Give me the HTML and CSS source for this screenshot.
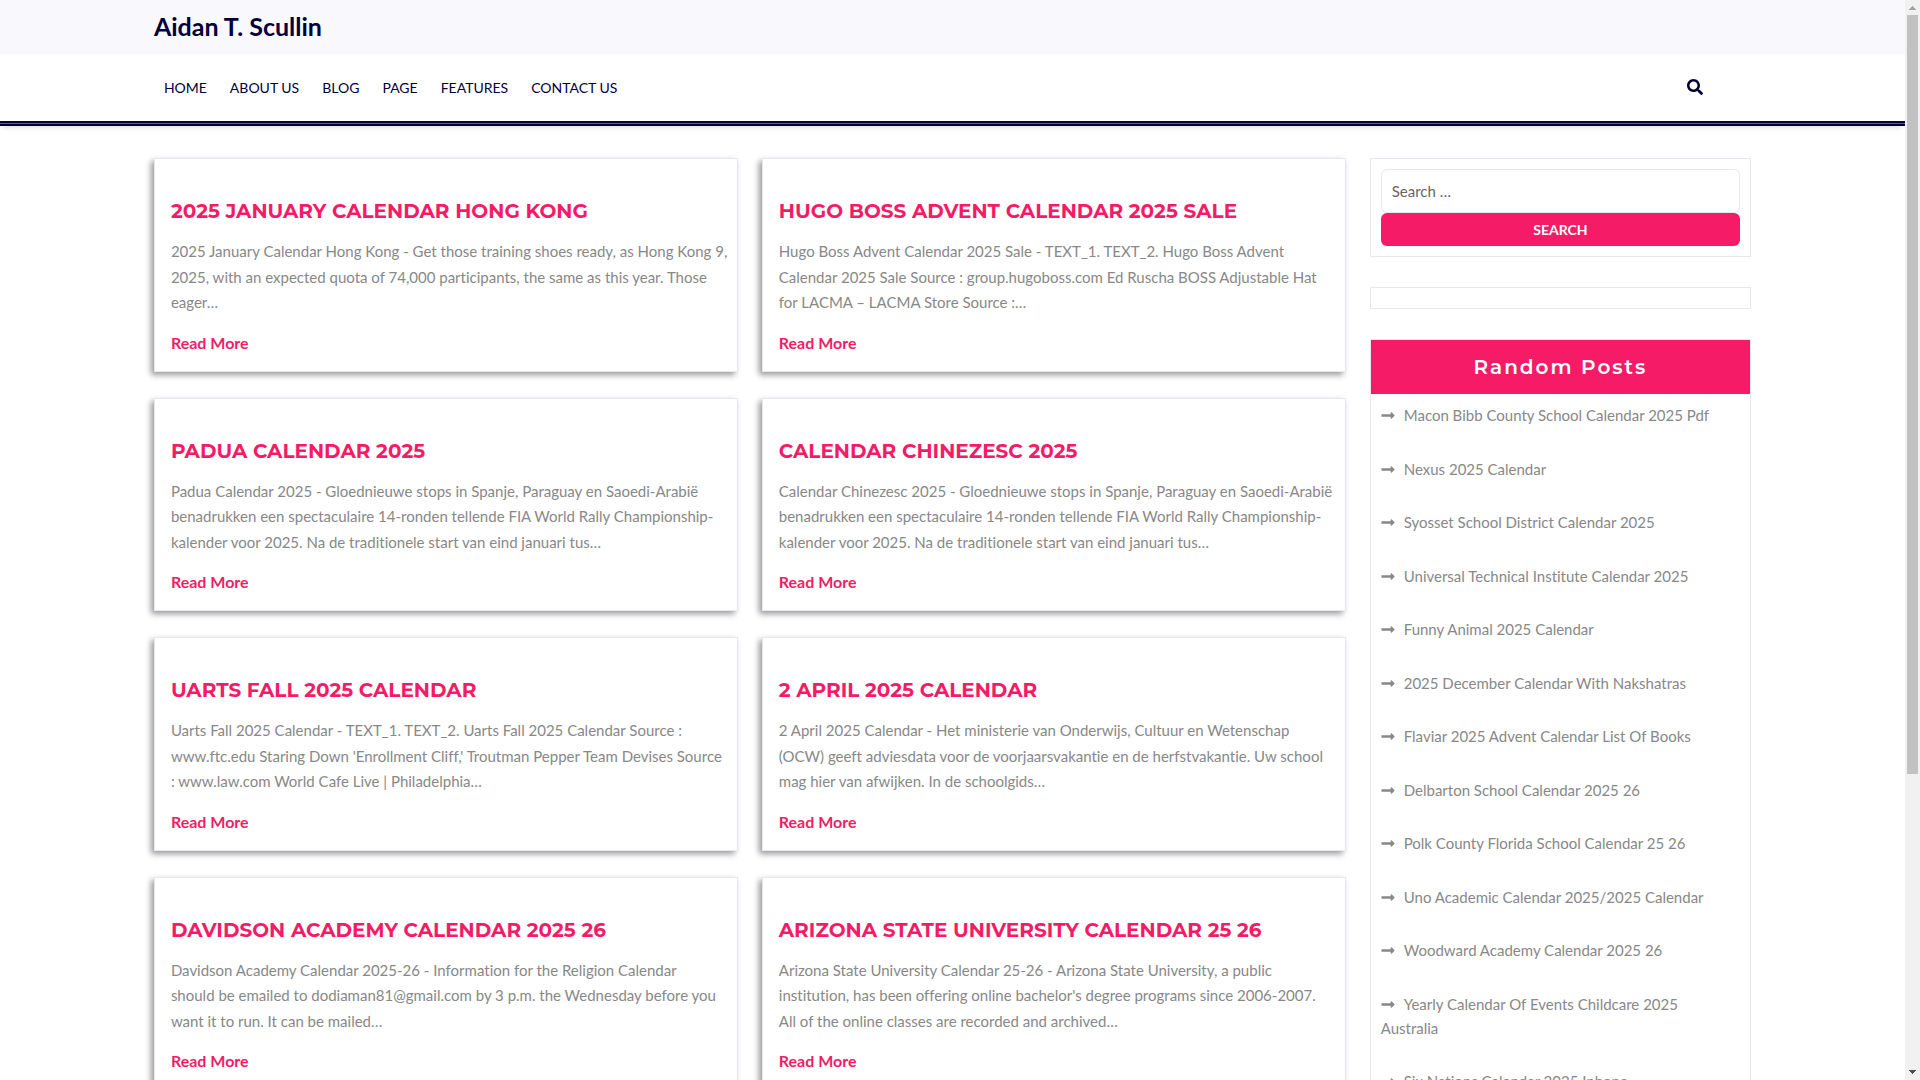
FILE: index.html
```html
<!DOCTYPE html>
<html lang="en">
<head>
    <meta charset="UTF-8">
    <meta name="viewport" content="width=device-width, initial-scale=1">
    <title>Aidan T. Scullin</title>
    <link rel="stylesheet" href="styles.css">
</head>
<body>
    <svg class="sprite" aria-hidden="true">
        <symbol id="arrow" viewBox="0 0 448 512">
            <path d="M313.941 216H12c-6.627 0-12 5.373-12 12v56c0 6.627 5.373 12 12 12h301.941v46.059c0 21.382 25.851 32.09 40.971 16.971l86.059-86.059c9.373-9.373 9.373-24.569 0-33.941l-86.059-86.059c-15.119-15.119-40.971-4.411-40.971 16.971V216z"/>
        </symbol>
    </svg>
    <div class="page">
        <header>
            <div class="topbar">
                <div class="container">
                    <p class="site-title"><a href="#">Aidan T. Scullin</a></p>
                </div>
            </div>
            <div class="menubar">
                <div class="menubar-inner">
                    <div class="container menu-row">
                        <nav class="menu">
                            <a href="#">Home</a>
                            <a href="#">About Us</a>
                            <a href="#">Blog</a>
                            <a href="#">Page</a>
                            <a href="#">Features</a>
                            <a href="#">Contact Us</a>
                        </nav>
                        <button class="search-toggle" type="button" aria-label="Open search">
                            <svg viewBox="0 0 512 512"><path d="M505 442.7L405.3 343c-4.5-4.500-10.600-7-17-7H372c27.600-35.300 44-79.700 44-128C416 93.100 322.900 0 208 0S0 93.100 0 208s93.100 208 208 208c48.300 0 92.700-16.400 128-44v16.300c0 6.400 2.500 12.500 7 17l99.700 99.700c9.400 9.400 24.600 9.400 33.900 0l28.300-28.300c9.400-9.400 9.400-24.600.1-34zM208 336c-70.700 0-128-57.200-128-128 0-70.700 57.200-128 128-128 70.700 0 128 57.200 128 128 0 70.700-57.200 128-128 128z"/></svg>
                        </button>
                    </div>
                </div>
            </div>
        </header>

        <div class="container content">
            <main class="posts">
                <article class="post">
                    <h2><a href="#">2025 January Calendar Hong Kong</a></h2>
                    <p>2025 January Calendar Hong Kong - Get those training shoes ready, as Hong Kong 9, 2025, with an expected quota of 74,000 participants, the same as this year. Those eager…</p>
                    <a class="read-more" href="#">Read More</a>
                </article>
                <article class="post">
                    <h2><a href="#">Hugo Boss Advent Calendar 2025 Sale</a></h2>
                    <p>Hugo Boss Advent Calendar 2025 Sale - TEXT_1. TEXT_2. Hugo Boss Advent Calendar 2025 Sale Source : group.hugoboss.com Ed Ruscha BOSS Adjustable Hat for LACMA – LACMA Store Source :…</p>
                    <a class="read-more" href="#">Read More</a>
                </article>
                <article class="post">
                    <h2><a href="#">Padua Calendar 2025</a></h2>
                    <p>Padua Calendar 2025 - Gloednieuwe stops in Spanje, Paraguay en Saoedi-Arabië benadrukken een spectaculaire 14-ronden tellende FIA World Rally Championship-kalender voor 2025. Na de traditionele start van eind januari tus…</p>
                    <a class="read-more" href="#">Read More</a>
                </article>
                <article class="post">
                    <h2><a href="#">Calendar Chinezesc 2025</a></h2>
                    <p>Calendar Chinezesc 2025 - Gloednieuwe stops in Spanje, Paraguay en Saoedi-Arabië benadrukken een spectaculaire 14-ronden tellende FIA World Rally Championship-kalender voor 2025. Na de traditionele start van eind januari tus…</p>
                    <a class="read-more" href="#">Read More</a>
                </article>
                <article class="post">
                    <h2><a href="#">Uarts Fall 2025 Calendar</a></h2>
                    <p>Uarts Fall 2025 Calendar - TEXT_1. TEXT_2. Uarts Fall 2025 Calendar Source : www.ftc.edu Staring Down 'Enrollment Cliff,' Troutman Pepper Team Devises Source : www.law.com World Cafe Live | Philadelphia…</p>
                    <a class="read-more" href="#">Read More</a>
                </article>
                <article class="post">
                    <h2><a href="#">2 April 2025 Calendar</a></h2>
                    <p>2 April 2025 Calendar - Het ministerie van Onderwijs, Cultuur en Wetenschap (OCW) geeft adviesdata voor de voorjaarsvakantie en de herfstvakantie. Uw school mag hier van afwijken. In de schoolgids…</p>
                    <a class="read-more" href="#">Read More</a>
                </article>
                <article class="post">
                    <h2><a href="#">Davidson Academy Calendar 2025 26</a></h2>
                    <p>Davidson Academy Calendar 2025-26 - Information for the Religion Calendar<br>should be emailed to dodiaman81@gmail.com by 3 p.m. the Wednesday before you want it to run. It can be mailed…</p>
                    <a class="read-more" href="#">Read More</a>
                </article>
                <article class="post">
                    <h2><a href="#">Arizona State University Calendar 25 26</a></h2>
                    <p>Arizona State University Calendar 25-26 - Arizona State University, a public institution, has been offering online bachelor's degree programs since 2006-2007.<br>All of the online classes are recorded and archived…</p>
                    <a class="read-more" href="#">Read More</a>
                </article>
            </main>

            <aside class="sidebar">
                <section class="widget">
                    <form class="search-form">
                        <input type="search" aria-label="Search for" placeholder="Search …">
                        <button type="submit">Search</button>
                    </form>
                </section>
                <section class="widget"></section>
                <section class="widget">
                    <h3>Random Posts</h3>
                    <ul>
                        <li><a href="#"><svg class="arrow"><use href="#arrow"/></svg>Macon Bibb County School Calendar 2025 Pdf</a></li>
                        <li><a href="#"><svg class="arrow"><use href="#arrow"/></svg>Nexus 2025 Calendar</a></li>
                        <li><a href="#"><svg class="arrow"><use href="#arrow"/></svg>Syosset School District Calendar 2025</a></li>
                        <li><a href="#"><svg class="arrow"><use href="#arrow"/></svg>Universal Technical Institute Calendar 2025</a></li>
                        <li><a href="#"><svg class="arrow"><use href="#arrow"/></svg>Funny Animal 2025 Calendar</a></li>
                        <li><a href="#"><svg class="arrow"><use href="#arrow"/></svg>2025 December Calendar With Nakshatras</a></li>
                        <li><a href="#"><svg class="arrow"><use href="#arrow"/></svg>Flaviar 2025 Advent Calendar List Of Books</a></li>
                        <li><a href="#"><svg class="arrow"><use href="#arrow"/></svg>Delbarton School Calendar 2025 26</a></li>
                        <li><a href="#"><svg class="arrow"><use href="#arrow"/></svg>Polk County Florida School Calendar 25 26</a></li>
                        <li><a href="#"><svg class="arrow"><use href="#arrow"/></svg>Uno Academic Calendar 2025/2025 Calendar</a></li>
                        <li><a href="#"><svg class="arrow"><use href="#arrow"/></svg>Woodward Academy Calendar 2025 26</a></li>
                        <li><a href="#"><svg class="arrow"><use href="#arrow"/></svg>Yearly Calendar Of Events Childcare 2025 Australia</a></li>
                        <li><a href="#"><svg class="arrow"><use href="#arrow"/></svg>Six Nations Calendar 2025 Iphone</a></li>
                    </ul>
                </section>
            </aside>
        </div>
    </div>

    <div class="scrollbar" aria-hidden="true">
        <svg class="scroll-up" viewBox="0 0 7 4"><path d="M3 0h1v1h1v1h1v1h1v1H0V3h1V2h1V1h1z"/></svg>
        <div class="scroll-track"><div class="scroll-thumb"></div></div>
        <svg class="scroll-down" viewBox="0 0 7 4"><path d="M0 0h7v1H6v1H5v1H4v1H3V3H2V2H1V1H0z"/></svg>
    </div>
</body>
</html>
```
FILE: styles.css
```css
* {
    box-sizing: border-box;
}
body {
    display: flex;
    height: 100vh;
    margin: 0;
    overflow: hidden;
    font-family: Lato, sans-serif;
    font-size: 15px;
    font-variant-ligatures: no-common-ligatures;
    color: #888;
    background: #fff;
}
a {
    color: inherit;
    text-decoration: none;
}
h2, h3, p, ul {
    margin: 0;
    padding: 0;
}
button {
    border: 0;
    font-family: inherit;
    cursor: pointer;
}
.sprite {
    display: none;
}
.page {
    flex: 1;
    overflow: hidden;
}
.container {
    width: 85%;
    margin: 0 auto;
    padding: 0 11px;
}

/* header */
.topbar {
    padding: 7px 0 9px;
    background: #f8f8fd;
}
.site-title {
    font-size: 25px;
    font-weight: 700;
    line-height: 38px;
    color: #02003a;
}
.menubar {
    border-bottom: 5px double #02003a;
    background: #1e6bff;
    box-shadow: 0 5px 5px -3px rgba(0, 0, 0, 0.12);
}
.menubar-inner {
    background: #fff;
}
.menu-row {
    display: flex;
    align-items: center;
    justify-content: space-between;
    height: 67px;
}
.menu {
    display: flex;
    gap: 23px;
    padding: 0 10px;
}
.menu a {
    font-size: 14px;
    line-height: 24px;
    text-transform: uppercase;
    color: #02003a;
}
.search-toggle {
    margin-right: 48px;
    padding: 0 0 2px;
    background: none;
}
.search-toggle svg {
    display: block;
    width: 16px;
    height: 16px;
    fill: #02003a;
}

/* content */
.content {
    display: grid;
    grid-template-columns: 25fr 8fr;
    gap: 24px;
    padding-top: 32px;
}
.posts {
    display: grid;
    grid-template-columns: 1fr 1fr;
    align-content: start;
    gap: 26px 24px;
}
.post {
    padding: 40px 8px 16px 16px;
    border: 1px solid #e7e7ef;
    background: #fff;
    box-shadow: -3px 3px 6px rgba(0, 0, 0, 0.4);
}
.post h2 {
    margin-bottom: 16px;
    font-family: Montserrat, Inter, sans-serif;
    font-size: 20px;
    font-weight: 700;
    line-height: 24px;
    text-transform: uppercase;
    color: #f51b67;
}
.post p {
    margin-bottom: 15px;
    line-height: 1.7;
}
.read-more {
    display: block;
    font-size: 16px;
    font-weight: 700;
    line-height: 24px;
    color: #f51b67;
}

/* sidebar */
.widget {
    margin-bottom: 30px;
    padding: 10px;
    border: 1px solid #e7e7ef;
}
.widget h3 {
    margin: -10px -10px 10px;
    font-family: Montserrat, Inter, sans-serif;
    font-size: 20px;
    font-weight: 600;
    line-height: 54px;
    letter-spacing: 2px;
    text-align: center;
    color: #fff;
    background: #f51b67;
}
.widget ul {
    list-style: none;
}
.widget li {
    margin-bottom: 30px;
    padding-right: 8px;
    line-height: 1.57;
}
.arrow {
    width: 14px;
    height: 15px;
    margin-right: 9px;
    vertical-align: -2px;
    fill: #888;
}
.search-form input {
    display: block;
    width: 100%;
    height: 44px;
    padding: 0 10px;
    border: 1px solid #e7e7ef;
    border-radius: 6px;
    font-family: inherit;
    font-size: 15px;
    background: #fff;
}
.search-form input::placeholder {
    color: #666;
}
.search-form button {
    width: 100%;
    height: 33px;
    border-radius: 6px;
    font-size: 14px;
    font-weight: 700;
    text-transform: uppercase;
    color: #fff;
    background: #f51b67;
}

/* scrollbar */
.scrollbar {
    display: flex;
    flex-direction: column;
    align-items: center;
    width: 15px;
    padding: 6px 0;
    background: #f1f1f1;
}
.scroll-up, .scroll-down {
    width: 7px;
    height: 4px;
}
.scroll-up {
    fill: #a3a3a3;
}
.scroll-down {
    fill: #505050;
}
.scroll-track {
    flex: 1;
    width: 11px;
    margin: 5px 0;
}
.scroll-thumb {
    height: 72.3%;
    background: #c1c1c1;
}
```
